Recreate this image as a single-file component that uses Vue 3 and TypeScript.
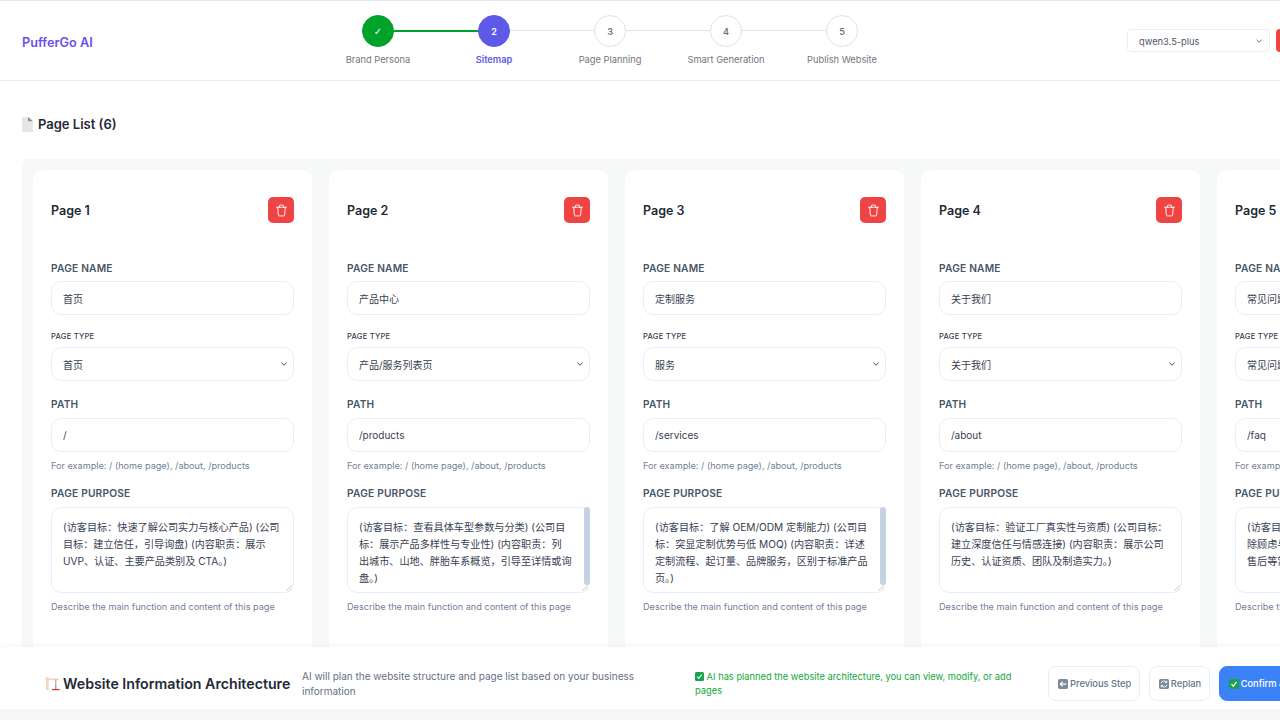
<script setup lang="ts">
interface PageItem { name: string; type: string; path: string; purpose: string; scroll?: boolean }
const steps = [
  { n: '✓', label: 'Brand Persona', state: 'done' },
  { n: '2', label: 'Sitemap', state: 'active' },
  { n: '3', label: 'Page Planning', state: '' },
  { n: '4', label: 'Smart Generation', state: '' },
  { n: '5', label: 'Publish Website', state: '' }
]
const types = ['首页', '产品/服务列表页', '服务', '关于我们', '常见问题', '联系我们']
const pages: PageItem[] = [
  { name: '首页', type: '首页', path: '/', purpose: '(访客目标：快速了解公司实力与核心产品) (公司目标：建立信任，引导询盘) (内容职责：展示 UVP、认证、主要产品类别及 CTA。)' },
  { name: '产品中心', type: '产品/服务列表页', path: '/products', scroll: true, purpose: '(访客目标：查看具体车型参数与分类) (公司目标：展示产品多样性与专业性) (内容职责：列\n出城市、山地、胖胎车系概览，引导至详情或询盘。)' },
  { name: '定制服务', type: '服务', path: '/services', scroll: true, purpose: '(访客目标：了解 OEM/ODM 定制能力) (公司目标：突显定制优势与低 MOQ) (内容职责：详述定制流程、起订量、品牌服务，区别于标准产品页。)' },
  { name: '关于我们', type: '关于我们', path: '/about', purpose: '(访客目标：验证工厂真实性与资质) (公司目标：建立深度信任与情感连接) (内容职责：展示公司历史、认证资质、团队及制造实力。)' },
  { name: '常见问题', type: '常见问题', path: '/faq', purpose: '(访客目标：快速解答采购的疑问) (公司目标：消除顾虑与疑问) (内容职责：解答起订量、交期、售后等常见问题。)' },
  { name: '联系我们', type: '联系我们', path: '/contact', purpose: '(访客目标：快速联系) (公司目标：获取询盘) (内容职责：提供表单与联系方式。)' }
]
</script>

<template>
  <div class="page">
    <header class="header">
      <div class="logo">PufferGo AI</div>
      <ol class="stepper">
        <li v-for="s in steps" :key="s.label" class="step" :class="s.state">
          <span class="dot">{{ s.n }}</span>
          <span class="step-label">{{ s.label }}</span>
        </li>
      </ol>
      <select class="model"><option>qwen3.5-plus</option></select>
      <button class="top-red" type="button" aria-label="Exit"></button>
    </header>

    <main class="main">
      <h2 class="list-title">
        <svg class="doc" viewBox="1 1 10 14" aria-hidden="true">
          <path d="M1 1h6.5L11 4.5V15H1z" fill="#e6e6e6" />
          <path d="M6.5 1L11 5H6.5z" fill="#8d8d8d" />
        </svg>
        <span>Page List (6)</span>
      </h2>
      <div class="panel">
        <article v-for="(p, i) in pages" :key="p.path" class="card">
          <div class="card-head">
            <h3>Page {{ i + 1 }}</h3>
            <button class="del" type="button" aria-label="Delete">
              <svg viewBox="0 0 24 24" fill="none" stroke="#fff" stroke-linecap="round" stroke-linejoin="round">
                <path d="M3 6h18" />
                <path d="M19 6l-1.2 14a2 2 0 0 1-2 2H8.2a2 2 0 0 1-2-2L5 6" />
                <path d="M8 6V4a2 2 0 0 1 2-2h4a2 2 0 0 1 2 2v2" />
              </svg>
            </button>
          </div>
          <label class="lbl">PAGE NAME</label>
          <input class="field" :value="p.name" />
          <label class="lbl small">PAGE TYPE</label>
          <select class="field sel">
            <option v-for="t in types" :key="t" :selected="t === p.type">{{ t }}</option>
          </select>
          <label class="lbl path">PATH</label>
          <input class="field" :value="p.path" />
          <p class="hint">For example: / (home page), /about, /products</p>
          <label class="lbl purpose">PAGE PURPOSE</label>
          <div class="ta-wrap">
            <textarea class="field ta" :class="{ scrolled: p.scroll }" :value="p.purpose"></textarea>
            <span v-if="p.scroll" class="thumb"></span>
          </div>
          <p class="hint">Describe the main function and content of this page</p>
        </article>
      </div>
    </main>

    <footer class="footer">
      <h1 class="foot-title">
        <svg class="emoji" viewBox="0 0 16 16" aria-hidden="true">
          <path d="M2.5 1v14" stroke="#f8d5bd" stroke-width="3" fill="none" />
          <path d="M0 3.5h15" stroke="#f8d5bd" stroke-width="2" fill="none" />
          <path d="M11.5 4v7" stroke="#9a8f88" stroke-width="1" />
          <path d="M7.5 14.5h8" stroke="#d9372c" stroke-width="1.4" />
          <path d="M11.5 10.5v3.5" stroke="#777" stroke-width="1" />
        </svg>
        <span>Website Information Architecture</span>
      </h1>
      <p class="foot-desc">AI will plan the website structure and page list based on your business information</p>
      <p class="foot-status">
        <svg class="check" viewBox="0 0 12 12" aria-hidden="true"><rect width="12" height="12" rx="2" fill="#16a34a" /><path d="M3 6.2l2.2 2.4L9 3.4" stroke="#fff" stroke-width="1.5" fill="none" /></svg>
        AI has planned the website architecture, you can view, modify, or add pages
      </p>
      <button class="btn" type="button">
        <svg class="ico" viewBox="0 0 12 12" aria-hidden="true"><rect width="12" height="12" rx="2" fill="#7d8a9a" /><path d="M10 6H3M5.5 3.2L2.8 6l2.7 2.8" stroke="#fff" stroke-width="1.5" fill="none" /></svg>
        Previous Step
      </button>
      <button class="btn" type="button">
        <svg class="ico" viewBox="0 0 12 12" aria-hidden="true"><rect width="12" height="12" rx="2" fill="#7d8a9a" /><path d="M2.5 5a3.6 3.6 0 0 1 6.5-1M9.5 7a3.6 3.6 0 0 1-6.5 1M9.3 2v2.3H7M2.7 10V7.7H5" stroke="#fff" stroke-width="1.1" fill="none" /></svg>
        Replan
      </button>
      <button class="btn primary" type="button">
        <svg class="ico" viewBox="0 0 12 12" aria-hidden="true"><rect width="12" height="12" rx="2" fill="#16a34a" /><path d="M3 6.2l2.2 2.4L9 3.4" stroke="#fff" stroke-width="1.5" fill="none" /></svg>
        Confirm and Continue
      </button>
    </footer>
    <div class="strip"></div>
  </div>
</template>

<style>
html, body { margin: 0; overflow: hidden; background: #fff; }
</style>

<style scoped>
.page {
  width: 1280px;
  height: 720px;
  overflow: hidden;
  display: flex;
  flex-direction: column;
  font-family: Inter, "Noto Sans CJK SC", sans-serif;
  color: #1f2937;
  background: #fff;
  border-top: 1px solid #e5e7eb;
  box-sizing: border-box;
}
.header {
  flex: none;
  height: 79px;
  width: 1400px;
  display: flex;
  align-items: flex-start;
  border-bottom: 1px solid #e9ebee;
  box-sizing: content-box;
  padding-left: 22px;
}
.logo {
  width: 298px;
  margin-top: 33px;
  font-size: 12.7px;
  line-height: 18px;
  font-weight: 600;
  color: #6a4ff0;
}
.stepper {
  display: flex;
  margin: 14px 0 0;
  padding: 0;
  list-style: none;
  width: 580px;
}
.step {
  position: relative;
  width: 116px;
  display: flex;
  flex-direction: column;
  align-items: center;
  gap: 7px;
}
.step:not(:last-child)::after {
  content: "";
  position: absolute;
  left: 74px;
  width: 84px;
  top: 15px;
  height: 1px;
  background: #e0e2e5;
}
.step.done::after { height: 1.5px; background: #00a32a; }
.dot {
  width: 32px;
  height: 32px;
  border-radius: 50%;
  box-sizing: border-box;
  border: 1.5px solid #e0e2e5;
  background: #fff;
  display: flex;
  align-items: center;
  justify-content: center;
  font-size: 9px;
  font-weight: 600;
  color: #6b7280;
}
.done .dot { background: #00a32a; border-color: #00a32a; color: #fff; font-weight: 400; font-size: 10px; font-family: "DejaVu Sans", sans-serif; }
.active .dot { background: #5c5ae6; border-color: #5c5ae6; color: #fff; }
.step-label { font-size: 9.3px; line-height: 12px; color: #71767e; white-space: nowrap; }
.active .step-label { color: #5c5ae6; font-weight: 600; }
.model {
  appearance: none;
  margin: 28px 0 0 227px;
  width: 143px;
  height: 23px;
  box-sizing: border-box;
  border: 1px solid #eceef1;
  border-radius: 4px;
  background: #fff url("data:image/svg+xml,%3Csvg xmlns='http://www.w3.org/2000/svg' width='6' height='4'%3E%3Cpath d='M.5.8L3 3.2 5.5.8' fill='none' stroke='%23666' stroke-width='.9'/%3E%3C/svg%3E") no-repeat right 7px center;
  padding: 1px 11px 0;
  font: 9.3px Inter, sans-serif;
  color: #4b5563;
}
.top-red {
  margin: 28px 0 0 6px;
  width: 30px;
  height: 23px;
  border: 0;
  border-radius: 4px;
  background: #ef4444;
}
.main {
  flex: 1;
  min-height: 0;
  overflow: hidden;
  padding: 0 0 0 22px;
}
.list-title {
  display: flex;
  align-items: center;
  gap: 5px;
  height: 24px;
  margin: 31px 0 23px 0;
  font-size: 13px;
  font-weight: 600;
  color: #1f2937;
}
.doc { width: 11px; height: 15px; flex: none; }
.panel {
  display: flex;
  gap: 17px;
  width: max-content;
  padding: 11px;
  background: #f7f9f9;
  border-radius: 6px 0 0 0;
}
.card {
  width: 279px;
  height: 560px;
  box-sizing: border-box;
  flex: none;
  padding: 0 18px;
  background: #fff;
  border-radius: 10px;
  display: flex;
  flex-direction: column;
}
.card-head {
  display: flex;
  justify-content: space-between;
  align-items: center;
  height: 26px;
  margin: 27px 0 39px;
}
.card-head h3 { margin: 0; font-size: 12.5px; font-weight: 600; color: #1f2937; }
.del {
  width: 26px;
  height: 26px;
  padding: 0;
  border: 0;
  border-radius: 5px;
  background: #ef4444;
  display: flex;
  align-items: center;
  justify-content: center;
}
.del svg { width: 13px; height: 13px; stroke-width: 1.7; }
.lbl {
  height: 13px;
  line-height: 13px;
  margin-bottom: 6px;
  font-size: 10.2px;
  font-weight: 600;
  letter-spacing: 0.2px;
  color: #475569;
}
.lbl.small { margin-top: 15px; margin-bottom: 4px; font-size: 7.6px; font-weight: 500; color: #374151; }
.lbl.path { margin-top: 17px; margin-bottom: 7px; }
.lbl.purpose { margin-top: 15px; margin-bottom: 7px; }
.field {
  box-sizing: border-box;
  width: 100%;
  height: 34px;
  flex: none;
  padding: 0 11px;
  border: 1px solid #e9edf5;
  border-radius: 10px;
  background: #fff;
  outline: none;
  font: 10px/16px Inter, "Noto Sans CJK SC", sans-serif;
  color: #374151;
}
.sel {
  appearance: none;
  padding-top: 1px;
  background: #fff url("data:image/svg+xml,%3Csvg xmlns='http://www.w3.org/2000/svg' width='6' height='4'%3E%3Cpath d='M.5.8L3 3.2 5.5.8' fill='none' stroke='%23444' stroke-width='1'/%3E%3C/svg%3E") no-repeat right 6px center;
}
.ta-wrap { position: relative; flex: none; height: 86px; }
.ta {
  display: block;
  height: 86px;
  padding: 11px 10px 11px 11px;
  overflow: hidden;
  font-size: 10.15px;
  line-height: 17px;
}
.ta.scrolled { padding-right: 17px; }
.ta::-webkit-resizer {
  background: url("data:image/svg+xml,%3Csvg xmlns='http://www.w3.org/2000/svg' width='6' height='6'%3E%3Cpath d='M.5 5.5l5-5M3.5 5.5l2-2' stroke='%23b4bac4' stroke-width='.8' fill='none'/%3E%3C/svg%3E") no-repeat right 1px bottom 1px;
}
.thumb {
  position: absolute;
  top: 0;
  right: 0.5px;
  width: 6px;
  height: 78px;
  border-radius: 3px;
  background: #c6d2e4;
}
.hint {
  margin: 8px 0 0;
  font-size: 9.15px;
  line-height: 12px;
  color: #718096;
}
.footer {
  flex: none;
  position: relative;
  height: 62px;
  width: 1400px;
  padding: 11px 0 0 45px;
  box-sizing: border-box;
  display: flex;
  align-items: center;
  background: #fff;
  box-shadow: 0 -2px 6px rgba(0, 0, 0, 0.03);
}
.foot-title {
  display: flex;
  align-items: center;
  gap: 3px;
  margin: 0;
  width: 257px;
  flex: none;
  font-size: 14.2px;
  font-weight: 600;
  white-space: nowrap;
  color: #1f2937;
}
.emoji { width: 15px; height: 15px; flex: none; }
.foot-desc {
  width: 360px;
  flex: none;
  margin: 0;
  font-size: 10px;
  line-height: 15px;
  color: #667085;
}
.foot-status {
  width: 325px;
  flex: none;
  margin: 0 28px 0 33px;
  font-size: 9.3px;
  line-height: 14px;
  color: #0fa83c;
}
.check { width: 9px; height: 9px; vertical-align: -1px; }
.btn {
  flex: none;
  height: 35px;
  margin-right: 8.5px;
  padding: 0 8px 0 9px;
  display: inline-flex;
  align-items: center;
  gap: 2px;
  box-sizing: border-box;
  border: 1px solid #e9edf5;
  border-radius: 8px;
  background: #fff;
  font: 500 9.3px Inter, sans-serif;
  color: #64748b;
  white-space: nowrap;
}
.ico { width: 10px; height: 10px; }
.btn.primary { background: #3b82f6; border-color: #3b82f6; color: #fff; }
.strip { flex: none; height: 11px; background: #f5f7f7; position: relative; }
</style>
